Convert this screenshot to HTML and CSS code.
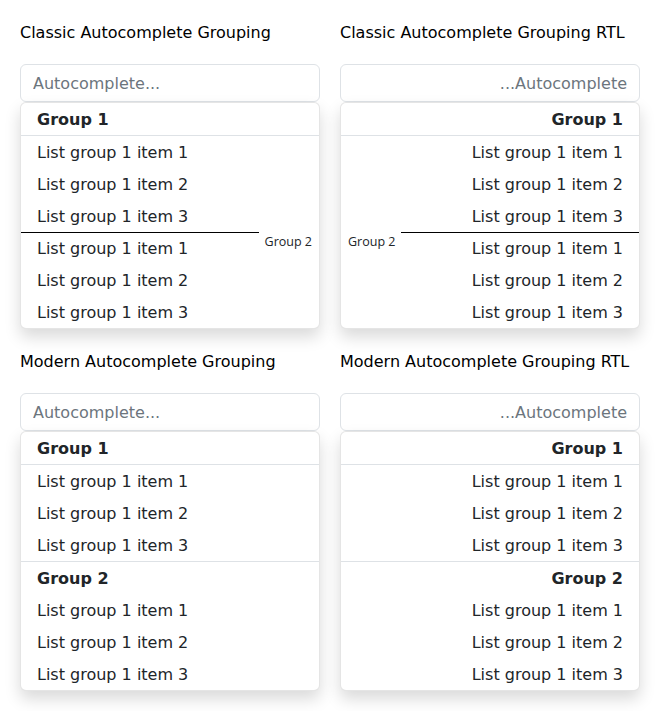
FILE: index.html
```html
<!DOCTYPE html>
<html lang="en">
<head>
<meta charset="utf-8">
<title>Autocomplete Grouping</title>
<link rel="stylesheet" href="styles.css">
</head>
<body>
<div class="grid">
  <section class="cell">
    <div class="title">Classic Autocomplete Grouping</div>
    <input class="input" type="text" placeholder="Autocomplete...">
    <div class="panel">
      <div class="header">Group 1</div>
      <div class="item">List group 1 item 1</div>
      <div class="item">List group 1 item 2</div>
      <div class="item">List group 1 item 3</div>
      <div class="group">
        <div class="sep"><span class="sep-line"></span><span class="sep-label">Group 2</span></div>
        <div class="item">List group 1 item 1</div>
        <div class="item">List group 1 item 2</div>
        <div class="item">List group 1 item 3</div>
      </div>
    </div>
  </section>
  <section class="cell">
    <div class="title">Classic Autocomplete Grouping RTL</div>
    <div class="rtl" dir="rtl">
      <input class="input" type="text" placeholder="Autocomplete...">
      <div class="panel">
        <div class="header">Group 1</div>
        <div class="item">List group 1 item 1</div>
        <div class="item">List group 1 item 2</div>
        <div class="item">List group 1 item 3</div>
        <div class="group">
          <div class="sep"><span class="sep-line"></span><span class="sep-label">Group 2</span></div>
          <div class="item">List group 1 item 1</div>
          <div class="item">List group 1 item 2</div>
          <div class="item">List group 1 item 3</div>
        </div>
      </div>
    </div>
  </section>
  <section class="cell">
    <div class="title">Modern Autocomplete Grouping</div>
    <input class="input" type="text" placeholder="Autocomplete...">
    <div class="panel">
      <div class="header">Group 1</div>
      <div class="item">List group 1 item 1</div>
      <div class="item">List group 1 item 2</div>
      <div class="item">List group 1 item 3</div>
      <div class="header top-line">Group 2</div>
      <div class="item">List group 1 item 1</div>
      <div class="item">List group 1 item 2</div>
      <div class="item">List group 1 item 3</div>
    </div>
  </section>
  <section class="cell">
    <div class="title">Modern Autocomplete Grouping RTL</div>
    <div class="rtl" dir="rtl">
      <input class="input" type="text" placeholder="Autocomplete...">
      <div class="panel">
        <div class="header">Group 1</div>
        <div class="item">List group 1 item 1</div>
        <div class="item">List group 1 item 2</div>
        <div class="item">List group 1 item 3</div>
        <div class="header top-line">Group 2</div>
        <div class="item">List group 1 item 1</div>
        <div class="item">List group 1 item 2</div>
        <div class="item">List group 1 item 3</div>
      </div>
    </div>
  </section>
</div>
</body>
</html>
```
FILE: styles.css
```css
* { box-sizing: border-box; }
html, body { margin: 0; background: #fff; }
body {
  font-family: "DejaVu Sans", sans-serif;
  font-size: 16px;
  line-height: 24px;
  color: #212529;
}
.grid {
  display: grid;
  grid-template-columns: 300px 300px;
  column-gap: 20px;
  row-gap: 20px;
  padding: 20px;
}
.cell { display: flex; flex-direction: column; }
.rtl { display: flex; flex-direction: column; }
.title {
  color: #000;
  padding-top: 1px;
  margin-bottom: 19px;
}
.input {
  display: block;
  width: 100%;
  height: 38px;
  padding: 6px 12px;
  font-family: "DejaVu Sans", sans-serif;
  font-size: 16px;
  line-height: 24px;
  color: #212529;
  border: 1px solid #dee2e6;
  border-radius: 6px;
  background: #fff;
  outline: none;
}
.input::placeholder { color: #6c757d; }
.panel {
  border: 1px solid rgba(0, 0, 0, 0.1);
  border-radius: 6px;
  background: #fff;
  box-shadow: 0 8px 16px rgba(0, 0, 0, 0.15);
  overflow: hidden;
}
.header {
  padding: 5px 16px 3px;
  font-weight: bold;
  border-bottom: 1px solid #dee2e6;
}
.header.top-line { border-top: 1px solid #dee2e6; border-bottom: none; }
.item {
  padding: 5px 16px 3px;
}
.group { position: relative; }
.sep {
  position: absolute;
  top: 0;
  left: 0;
  right: 0;
  display: flex;
  align-items: flex-start;
}
.sep-line {
  flex: 1;
  border-top: 1px solid #000;
}
.sep-label {
  font-family: "Open Sans", sans-serif;
  font-size: 12.5px;
  line-height: 20px;
  padding: 0 7px 0 6px;
  color: #212529;
}
[dir="rtl"] .sep-label { padding: 0 6px 0 7px; }
```
